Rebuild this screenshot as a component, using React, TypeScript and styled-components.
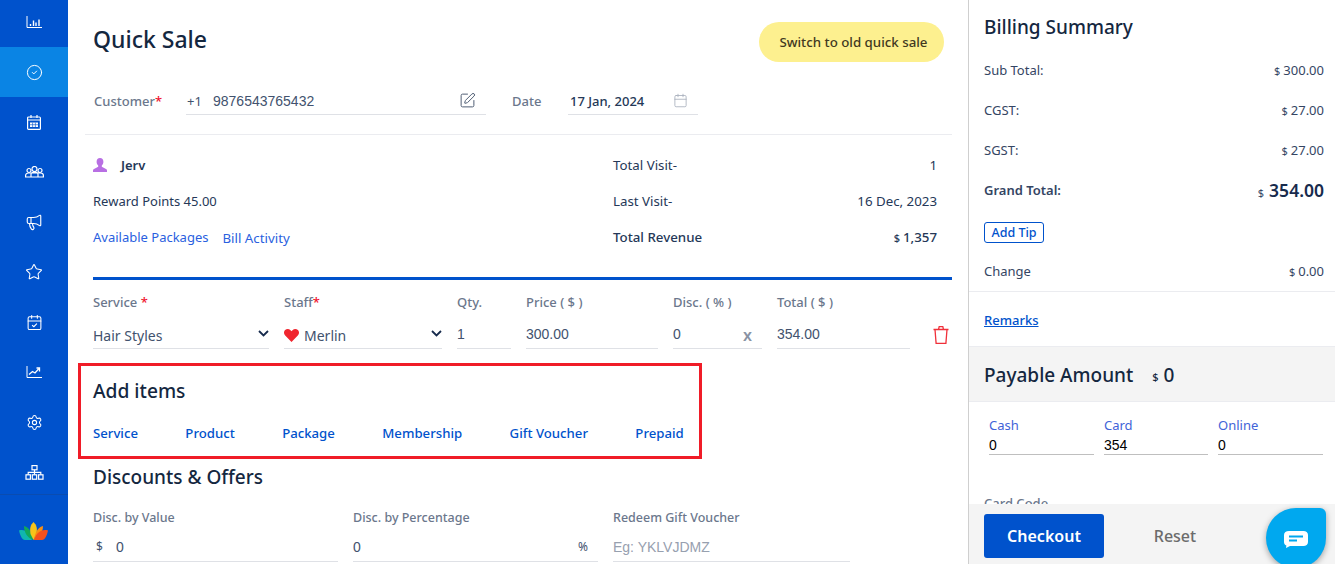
import styled, { createGlobalStyle } from "styled-components";
import { CalendarCheck, Calendar, CircleCheck, Megaphone, Settings, SquarePen, Star } from "lucide-react";

const GlobalStyle = createGlobalStyle`
  html, body { margin: 0; padding: 0; height: 100%; overflow: hidden; background: #fff; }
  * { box-sizing: border-box; }
  body { font-family: "Noto Sans", "Open Sans", sans-serif; color: #172b4d; }
`;

const Page = styled.div`
  display: flex;
  width: 1335px;
  height: 564px;
  overflow: hidden;
`;

const Sidebar = styled.nav`
  width: 68px;
  flex: none;
  background: #0052cc;
  display: flex;
  flex-direction: column;
`;

const NavItem = styled.div<{ $active?: boolean }>`
  height: 50px;
  display: flex;
  align-items: center;
  justify-content: center;
  color: #fff;
  background: ${(p) => (p.$active ? "#0a84e4" : "transparent")};
`;

const NavList = styled.div`
  margin-top: -3px;
  height: 497px;
  overflow: hidden;
`;

const LogoCell = styled.div`
  flex: 1;
  border-top: 1px solid #0a4cb0;
  display: flex;
  align-items: center;
  justify-content: center;
  padding: 2px 2px 0 0;
`;

const Main = styled.main`
  width: 900px;
  flex: none;
  padding: 22px 16px 0 17px;
  height: 564px;
  overflow: hidden;
`;

const Head = styled.div`
  display: flex;
  justify-content: space-between;
  align-items: center;
  padding: 0 8px;
  height: 40px;
`;

const Title = styled.h1`
  margin: 0 0 6px;
  font-size: 23px;
  line-height: 32px;
  font-weight: 500;
  color: #14273f;
`;

const SwitchBtn = styled.button`
  width: 185px;
  height: 40px;
  border: 0;
  border-radius: 20px;
  background: #fdf08f;
  color: #42391f;
  font: 500 13.3px "Noto Sans", sans-serif;
  padding: 0 0 0 4px;
`;

const CustomerRow = styled.div`
  display: flex;
  align-items: flex-end;
  height: 53px;
  padding-left: 9px;
`;

const RowLabel = styled.span<{ $w: number; $gap?: number }>`
  width: ${(p) => p.$w}px;
  margin-left: ${(p) => p.$gap ?? 0}px;
  font-size: 13px;
  font-weight: 500;
  color: #6b778c;
  line-height: 18px;
  padding-bottom: 5px;
  flex: none;
`;

const Req = styled.span`
  color: #f0142f;
`;

const Underlined = styled.div<{ $w: number }>`
  width: ${(p) => p.$w}px;
  height: 28px;
  border-bottom: 1px solid #dfe1e6;
  display: flex;
  align-items: center;
  flex: none;
`;

const Prefix = styled.span`
  font-size: 13px;
  width: 27px;
  padding-left: 1px;
  color: #42526e;
`;

const PlainInput = styled.input<{ $black?: boolean }>`
  border: 0;
  outline: 0;
  padding: 0;
  min-width: 0;
  flex: 1;
  width: 100%;
  background: transparent;
  font: 14px "Liberation Sans", Arial, sans-serif;
  color: ${(p) => (p.$black ? "#000" : "#42526e")};
  &::placeholder { color: #97a0af; }
`;

const PenIcon = styled(SquarePen)`
  margin-right: 10px;
  flex: none;
`;

const DateIcon = styled(Calendar)`
  margin-right: 10px;
  flex: none;
`;

const DateText = styled.span`
  font-size: 13px;
  font-weight: 500;
  color: #253858;
  flex: 1;
  padding-left: 2px;
`;

const Rule = styled.hr`
  border: 0;
  border-top: 1px solid #ebecf0;
  margin: 19px 0 0;
`;

const InfoGrid = styled.div`
  display: grid;
  grid-template-columns: 520px 324px;
  margin: 12px 0 0 8px;
  width: 859px;
  grid-auto-rows: 36px;
  align-items: center;
  font-size: 13px;
  color: #253858;
`;

const Person = styled.div`
  display: flex;
  align-items: center;
  gap: 14px;
  font-weight: 600;
  font-size: 13px;
`;

const Between = styled.div<{ $bold?: boolean }>`
  display: flex;
  justify-content: space-between;
  font-size: 13.3px;
  font-weight: ${(p) => (p.$bold ? 500 : 400)};
`;

const LinkRow = styled.div`
  display: flex;
  gap: 14px;
`;

const TextLink = styled.a<{ $drop?: boolean }>`
  color: #2a5fe0;
  font-size: ${(p) => (p.$drop ? 13.3 : 13)}px;
  position: relative;
  top: ${(p) => (p.$drop ? 1 : 0)}px;
`;

const BlueBar = styled.div`
  height: 3px;
  background: #0052cc;
  margin: 22px 0 0 8px;
  width: 859px;
`;

const LineGrid = styled.div`
  display: grid;
  grid-template-columns: 176px 158px 54px 132px 89px 133px 40px;
  column-gap: 15px;
  margin: 12px 0 0 8px;
`;

const FieldLabel = styled.div`
  font-size: 13px;
  font-weight: 500;
  color: #6b778c;
  line-height: 20px;
  height: 20px;
`;

const LineCell = styled.div`
  margin-top: 7px;
  height: 30px;
  border-bottom: 1px solid #dfe1e6;
  display: flex;
  align-items: center;
  font-size: 14px;
  color: #42526e;
`;

const SelectText = styled.span<{ $indent?: number }>`
  flex: 1;
  padding: 4px 0 0 ${(p) => p.$indent ?? 0}px;
`;

const HeartWrap = styled.span`
  display: flex;
  padding-top: 4px;
`;

const TrashCell = styled.div`
  margin-top: 10px;
  padding-left: 8px;
  height: 26px;
  display: flex;
  align-items: center;
`;

const DiscX = styled.span`
  color: #8993a4;
  font-weight: 600;
  font-size: 16px;
  padding: 3px 10px 0 0;
`;

const AddItems = styled.section`
  width: 624px;
  height: 96px;
  margin: 14px 0 0 -7px;
  border: 3px solid #f01c28;
  padding: 11px 0 0 12px;
`;

const SectionTitle = styled.h2`
  margin: 0;
  font-size: 19.2px;
  line-height: 28px;
  font-weight: 500;
  color: #14273f;
`;

const ItemLinks = styled.div`
  display: flex;
  gap: 47.4px;
  margin-top: 19px;
`;

const ItemLink = styled.a`
  color: #0052cc;
  font-size: 13.2px;
  font-weight: 500;
  line-height: 18px;
`;

const DiscountsTitle = styled(SectionTitle)`
  margin: 4px 0 0 8px;
  font-size: 19px;
`;

const DiscountGrid = styled.div`
  display: grid;
  grid-template-columns: 245px 245px 237px;
  column-gap: 15px;
  margin: 17px 0 0 8px;
`;

const SmallLabel = styled(FieldLabel)`
  font-size: 12.5px;
`;

const DiscountCell = styled.div`
  margin-top: 4px;
  height: 30px;
  border-bottom: 1px solid #dfe1e6;
  display: flex;
  align-items: center;
  font-size: 14px;
  color: #42526e;
`;

const Dollar = styled.span`
  width: 23px;
  padding-left: 3px;
  font-size: 12px;
`;

const Right = styled.aside`
  flex: 1;
  border-left: 1px solid #cfcfcf;
  height: 564px;
  position: relative;
  overflow: hidden;
`;

const SummaryTop = styled.div`
  padding: 13px 11px 0 15px;
  height: 292px;
  border-bottom: 1px solid #ebecf0;
`;

const SummaryTitle = styled(SectionTitle)`
  font-size: 19px;
  margin-bottom: 9px;
`;

const SummaryRow = styled.div<{ $bold?: boolean }>`
  display: flex;
  justify-content: space-between;
  align-items: center;
  height: 40px;
  font-size: 13px;
  color: #344563;
  font-weight: ${(p) => (p.$bold ? 600 : 400)};
`;

const Cur = styled.span`
  font-size: 11px;
  margin-right: 3px;
`;

const BigCur = styled(Cur)`
  margin-right: 5px;
  font-weight: 400;
`;

const Big = styled.span`
  font-size: 17.5px;
  font-weight: 600;
  color: #172b4d;
`;

const TipBtn = styled.button`
  display: block;
  width: 60px;
  height: 21px;
  margin-top: 12px;
  border: 1px solid #0052cc;
  border-radius: 3px;
  background: #fff;
  color: #0052cc;
  font: 500 12.5px "Noto Sans", sans-serif;
  padding: 0;
`;

const ChangeRow = styled(SummaryRow)`
  margin-top: 8px;
`;

const RemarksRow = styled.div`
  height: 54px;
  padding: 19px 0 0 15px;
  font-size: 13px;
  font-weight: 500;
  line-height: 18px;
`;

const Remarks = styled.a`
  color: #0052cc;
  text-decoration: underline;
`;

const PayableBar = styled.div`
  height: 56px;
  background: #f4f4f4;
  border-top: 1px solid #ebecf0;
  border-bottom: 1px solid #ebecf0;
  display: flex;
  align-items: center;
  padding: 1px 0 0 15px;
  font-size: 19px;
  font-weight: 500;
  color: #14273f;
`;

const PayCur = styled.span`
  font-size: 11px;
  margin: 3px 5px 0 19px;
`;

const PayGrid = styled.div`
  display: grid;
  grid-template-columns: 105px 104px 105px;
  column-gap: 10px;
  padding: 14px 0 0 20px;
`;

const PayLabel = styled.div`
  font-size: 13px;
  color: #3f63d8;
  line-height: 18px;
`;

const PayField = styled.div`
  height: 21px;
  border-bottom: 1px solid #bfbfbf;
  display: flex;
  align-items: center;
  padding-top: 2px;
`;

const CardCode = styled.div`
  margin: 39px 0 0 15px;
  font-size: 13px;
  font-weight: 500;
  color: #6b778c;
`;

const Footer = styled.div`
  position: absolute;
  left: 0;
  right: 0;
  bottom: 0;
  height: 60px;
  background: #f4f4f4;
  display: flex;
  padding: 10px 0 0 15px;
`;

const Checkout = styled.button`
  width: 120px;
  height: 44px;
  border: 0;
  border-radius: 3px;
  background: #0052cc;
  color: #fff;
  font: 600 16px "Noto Sans", sans-serif;
  padding: 0;
`;

const Reset = styled.button`
  width: 142px;
  height: 44px;
  border: 0;
  background: transparent;
  color: #6b6b6b;
  font: 500 16px "Noto Sans", sans-serif;
  padding: 0;
`;

const Chat = styled.div`
  position: absolute;
  left: 297px;
  top: 508px;
  width: 60px;
  height: 60px;
  padding-top: 2px;
  background: #00a8ef;
  border-radius: 50% 6px 50% 50%;
  box-shadow: 0 2px 6px rgba(0, 0, 0, 0.35);
  display: flex;
  align-items: center;
  justify-content: center;
`;

const ChartIcon = () => (
  <svg width="16" height="12" viewBox="0 0 16 12" fill="none" stroke="#fff" strokeWidth="1">
    <path d="M1 0v11.500h15" />
    <path d="M4.500 10V8M7.500 10V4.500M10 10V6.500M13 10V3.500" strokeWidth="1.400" />
  </svg>
);

const GridCalendar = () => (
  <svg width="14" height="15" viewBox="0 0 14 15" fill="none" stroke="#fff" strokeWidth="1.200">
    <rect x=".6" y="2" width="12.800" height="12.400" rx="1" />
    <path d="M.6 5h12.800M4 0v3M10 0v3" />
    <path d="M3 7.500h8v4.500H3z" fill="#fff" stroke="none" />
    <path d="M5.600 7.500v4.500M8.400 7.500v4.500M3 9.700h8" stroke="#0052cc" strokeWidth=".6" />
  </svg>
);

const TeamIcon = () => (
  <svg width="19" height="12" viewBox="0 0 19 12" fill="none" stroke="#fff" strokeWidth="1.200">
    <circle cx="9.500" cy="3" r="2.500" />
    <circle cx="4" cy="4.500" r="2" />
    <circle cx="15" cy="4.500" r="2" />
    <path d="M.6 11V9.500C.6 8 2 7 3.500 7h12C17 7 18.400 8 18.400 9.500V11zM6 11V8.500C6 7 7.500 6 9.500 6s3.500 1 3.500 2.500V11" />
  </svg>
);

const TrendIcon = () => (
  <svg width="16" height="12" viewBox="0 0 16 12" fill="none" stroke="#fff" strokeWidth="1">
    <path d="M1 0v11.500h15" />
    <path d="M3 8.500l3.500-3 2.500 1.500 4-4.500" strokeWidth="1.300" />
    <path d="M10.500 2h3v3.500" strokeWidth="1.300" />
  </svg>
);

const TreeIcon = () => (
  <svg width="19" height="15" viewBox="0 0 19 15" fill="none" stroke="#fff" strokeWidth="1.200">
    <rect x="7" y=".6" width="5" height="4.200" />
    <rect x="1" y="9.800" width="4.400" height="4.400" />
    <rect x="7.300" y="9.800" width="4.400" height="4.400" />
    <rect x="13.600" y="9.800" width="4.400" height="4.400" />
    <path d="M9.500 4.800v5M3.200 9.800V7.300h12.600v2.500" />
  </svg>
);

const Lotus = () => (
  <svg width="29" height="18" viewBox="0 0 29 18">
    <path d="M0 8.500c5-1.500 10 .5 13 9.500H6C3 18 1 13 0 8.500z" fill="#10b6b0" />
    <path d="M5 4c4 1 8 5 9 14-5-2-9-7-9-14z" fill="#12a85a" />
    <path d="M14.500 0c3 3 4 6 3 12l-3 6-3-6c-1-6 0-9 3-12z" fill="#f7c31a" />
    <path d="M24 4c0 7-4 12-9 14 1-9 5-13 9-14z" fill="#f98f12" />
    <path d="M29 8.500c-1 4.500-3 9.500-6 9.500h-8c3-9 9-11 14-9.500z" fill="#f4511e" />
  </svg>
);

const UserIcon = () => (
  <svg width="14" height="14" viewBox="0 0 14 14" fill="#b86fe3">
    <path d="M7 0c2.200 0 3.400 1.700 3.400 3.800 0 1.600-.7 3-1.600 3.800v1.200l4.200 2.200c.6.300 1 .8 1 1.400V14H0v-1.600c0-.6.400-1.100 1-1.400l4.200-2.200V7.600C4.300 6.800 3.600 5.400 3.600 3.800 3.600 1.700 4.800 0 7 0z" />
  </svg>
);

const Chevron = () => (
  <svg width="11" height="7" viewBox="0 0 11 7" fill="none" stroke="#172b4d" strokeWidth="1.800">
    <path d="M1 1l4.500 4.500L10 1" />
  </svg>
);

const Heart = () => (
  <svg width="15" height="13" viewBox="0 0 15 13" fill="#f0262f">
    <path d="M7.500 13L1.200 6.600C-.4 5-.4 2.500 1.100 1 2.700-.4 5-.3 6.500 1.200l1 1 1-1C10-.3 12.300-.4 13.900 1c1.500 1.500 1.500 4-.1 5.600z" />
  </svg>
);

const Trash = () => (
  <svg width="16" height="18" viewBox="0 0 16 18" fill="none" stroke="#f0303a" strokeWidth="1.300">
    <path d="M.5 3.500h15M2 3.500l1.100 13.900h9.800L14 3.500M5.500 3.500l.7-2.900h3.600l.7 2.900" />
  </svg>
);

const ChatGlyph = () => (
  <svg width="24" height="17" viewBox="0 0 24 17">
    <path d="M5 0h14.500C22 0 24 1.500 24 4v7c0 2.500-2 4-4.500 4H6l-4 2 .4-2.400C1 14 0 12.800 0 11V4c0-2.500 2-4 5-4z" fill="#fff" />
    <path d="M5 5.500h14M5 9.500h8" stroke="#00a8ef" strokeWidth="2" />
  </svg>
);

const navIcons = [
  <ChartIcon />,
  <CircleCheck size={17} strokeWidth={1.4} />,
  <GridCalendar />,
  <TeamIcon />,
  <Megaphone size={18} strokeWidth={1.5} />,
  <Star size={18} strokeWidth={1.4} />,
  <CalendarCheck size={17} strokeWidth={1.5} />,
  <TrendIcon />,
  <Settings size={17} strokeWidth={1.5} />,
  <TreeIcon />,
];

const items = ["Service", "Product", "Package", "Membership", "Gift Voucher", "Prepaid"];

export default function App() {
  return (
    <Page>
      <GlobalStyle />
      <Sidebar>
        <NavList>
          {navIcons.map((icon, i) => (
            <NavItem key={i} $active={i === 1}>
              {icon}
            </NavItem>
          ))}
        </NavList>
        <LogoCell>
          <Lotus />
        </LogoCell>
      </Sidebar>
      <Main>
        <Head>
          <Title>Quick Sale</Title>
          <SwitchBtn>Switch to old quick sale</SwitchBtn>
        </Head>
        <CustomerRow>
          <RowLabel $w={92}>
            Customer<Req>*</Req>
          </RowLabel>
          <Underlined $w={300}>
            <Prefix>+1</Prefix>
            <PlainInput readOnly value="9876543765432" />
            <PenIcon size={17} color="#4f5d73" strokeWidth={1.4} />
          </Underlined>
          <RowLabel $w={56} $gap={26}>
            Date
          </RowLabel>
          <Underlined $w={130}>
            <DateText>17 Jan, 2024</DateText>
            <DateIcon size={15} color="#a5adba" strokeWidth={1.3} />
          </Underlined>
        </CustomerRow>
        <Rule />
        <InfoGrid>
          <Person>
            <UserIcon /> Jerv
          </Person>
          <Between>
            <span>Total Visit-</span>
            <span>1</span>
          </Between>
          <div>Reward Points 45.00</div>
          <Between>
            <span>Last Visit-</span>
            <span>16 Dec, 2023</span>
          </Between>
          <LinkRow>
            <TextLink>Available Packages</TextLink>
            <TextLink $drop>Bill Activity</TextLink>
          </LinkRow>
          <Between $bold>
            <span>Total Revenue</span>
            <span>
              <Cur>$</Cur>1,357
            </span>
          </Between>
        </InfoGrid>
        <BlueBar />
        <LineGrid>
          <FieldLabel>
            Service <Req>*</Req>
          </FieldLabel>
          <FieldLabel>
            Staff<Req>*</Req>
          </FieldLabel>
          <FieldLabel>Qty.</FieldLabel>
          <FieldLabel>Price ( $ )</FieldLabel>
          <FieldLabel>Disc. ( % )</FieldLabel>
          <FieldLabel>Total ( $ )</FieldLabel>
          <div />
          <LineCell>
            <SelectText>Hair Styles</SelectText>
            <Chevron />
          </LineCell>
          <LineCell>
            <HeartWrap>
              <Heart />
            </HeartWrap>
            <SelectText $indent={5}>Merlin</SelectText>
            <Chevron />
          </LineCell>
          <LineCell>
            <PlainInput readOnly value="1" />
          </LineCell>
          <LineCell>
            <PlainInput readOnly value="300.00" />
          </LineCell>
          <LineCell>
            <PlainInput readOnly value="0" />
            <DiscX>x</DiscX>
          </LineCell>
          <LineCell>
            <PlainInput readOnly value="354.00" />
          </LineCell>
          <TrashCell>
            <Trash />
          </TrashCell>
        </LineGrid>
        <AddItems>
          <SectionTitle>Add items</SectionTitle>
          <ItemLinks>
            {items.map((item) => (
              <ItemLink key={item}>{item}</ItemLink>
            ))}
          </ItemLinks>
        </AddItems>
        <DiscountsTitle>Discounts &amp; Offers</DiscountsTitle>
        <DiscountGrid>
          <SmallLabel>Disc. by Value</SmallLabel>
          <SmallLabel>Disc. by Percentage</SmallLabel>
          <SmallLabel>Redeem Gift Voucher</SmallLabel>
          <DiscountCell>
            <Dollar>$</Dollar>
            <PlainInput readOnly value="0" />
          </DiscountCell>
          <DiscountCell>
            <PlainInput readOnly value="0" />
            <Dollar>%</Dollar>
          </DiscountCell>
          <DiscountCell>
            <PlainInput placeholder="Eg: YKLVJDMZ" />
          </DiscountCell>
        </DiscountGrid>
      </Main>
      <Right>
        <SummaryTop>
          <SummaryTitle>Billing Summary</SummaryTitle>
          <SummaryRow>
            <span>Sub Total:</span>
            <span>
              <Cur>$</Cur>300.00
            </span>
          </SummaryRow>
          <SummaryRow>
            <span>CGST:</span>
            <span>
              <Cur>$</Cur>27.00
            </span>
          </SummaryRow>
          <SummaryRow>
            <span>SGST:</span>
            <span>
              <Cur>$</Cur>27.00
            </span>
          </SummaryRow>
          <SummaryRow $bold>
            <span>Grand Total:</span>
            <span>
              <BigCur>$</BigCur>
              <Big>354.00</Big>
            </span>
          </SummaryRow>
          <TipBtn>Add Tip</TipBtn>
          <ChangeRow>
            <span>Change</span>
            <span>
              <Cur>$</Cur>0.00
            </span>
          </ChangeRow>
        </SummaryTop>
        <RemarksRow>
          <Remarks>Remarks</Remarks>
        </RemarksRow>
        <PayableBar>
          Payable Amount
          <PayCur>$</PayCur>0
        </PayableBar>
        <PayGrid>
          <PayLabel>Cash</PayLabel>
          <PayLabel>Card</PayLabel>
          <PayLabel>Online</PayLabel>
          <PayField>
            <PlainInput $black readOnly value="0" />
          </PayField>
          <PayField>
            <PlainInput $black readOnly value="354" />
          </PayField>
          <PayField>
            <PlainInput $black readOnly value="0" />
          </PayField>
        </PayGrid>
        <CardCode>Card Code</CardCode>
        <Footer>
          <Checkout>Checkout</Checkout>
          <Reset>Reset</Reset>
        </Footer>
        <Chat>
          <ChatGlyph />
        </Chat>
      </Right>
    </Page>
  );
}
